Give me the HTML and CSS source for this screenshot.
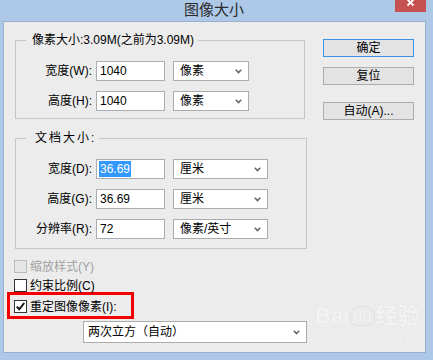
FILE: index.html
```html
<!DOCTYPE html>
<html lang="zh-CN">
<head>
<meta charset="utf-8">
<title>图像大小</title>
<link rel="stylesheet" href="styles.css">
</head>
<body>
<div class="titlebar">
  <div class="title">图像大小</div>
  <div class="close">
    <svg width="31" height="12" viewBox="0 0 31 12"><path d="M12.5 -0.5 L18.5 5.5 M18.5 -0.5 L12.5 5.5" stroke="#fff" stroke-width="1.8" fill="none"/></svg>
  </div>
</div>
<div class="dialog">
  <div class="left">
    <fieldset class="group g1">
      <legend>像素大小:3.09M(之前为3.09M)</legend>
      <div class="row">
        <label class="lbl">宽度(W):</label>
        <div class="input"><span class="val">1040</span></div>
        <div class="select s-short"><span>像素</span><svg class="chev" width="7" height="5" viewBox="0 0 7 5"><path d="M0.8 0.8 L3.5 3.6 L6.2 0.8" stroke="#666" stroke-width="1.6" fill="none"/></svg></div>
      </div>
      <div class="row">
        <label class="lbl">高度(H):</label>
        <div class="input"><span class="val">1040</span></div>
        <div class="select s-short"><span>像素</span><svg class="chev" width="7" height="5" viewBox="0 0 7 5"><path d="M0.8 0.8 L3.5 3.6 L6.2 0.8" stroke="#666" stroke-width="1.6" fill="none"/></svg></div>
      </div>
    </fieldset>
    <fieldset class="group g2">
      <legend>文档大小:</legend>
      <div class="row">
        <label class="lbl">宽度(D):</label>
        <div class="input"><span class="val sel">36.69</span></div>
        <div class="select s-long"><span>厘米</span><svg class="chev" width="7" height="5" viewBox="0 0 7 5"><path d="M0.8 0.8 L3.5 3.6 L6.2 0.8" stroke="#666" stroke-width="1.6" fill="none"/></svg></div>
      </div>
      <div class="row">
        <label class="lbl">高度(G):</label>
        <div class="input"><span class="val">36.69</span></div>
        <div class="select s-long"><span>厘米</span><svg class="chev" width="7" height="5" viewBox="0 0 7 5"><path d="M0.8 0.8 L3.5 3.6 L6.2 0.8" stroke="#666" stroke-width="1.6" fill="none"/></svg></div>
      </div>
      <div class="row">
        <label class="lbl">分辨率(R):</label>
        <div class="input"><span class="val">72</span></div>
        <div class="select s-long"><span>像素/英寸</span><svg class="chev" width="7" height="5" viewBox="0 0 7 5"><path d="M0.8 0.8 L3.5 3.6 L6.2 0.8" stroke="#666" stroke-width="1.6" fill="none"/></svg></div>
      </div>
    </fieldset>
    <div class="check disabled first"><span class="box"></span><span class="ctext">缩放样式(Y)</span></div>
    <div class="check second"><span class="box"></span><span class="ctext">约束比例(C)</span></div>
    <div class="highlight">
      <div class="check"><span class="box checked"><svg width="11" height="11" viewBox="0 0 11 11"><path d="M1.8 5.6 L4.3 8.3 L9.2 2" stroke="#111" stroke-width="2" fill="none"/></svg></span><span class="ctext">重定图像像素(I):</span></div>
    </div>
    <div class="select s-wide"><span>两次立方（自动）</span><svg class="chev" width="7" height="5" viewBox="0 0 7 5"><path d="M0.8 0.8 L3.5 3.6 L6.2 0.8" stroke="#666" stroke-width="1.6" fill="none"/></svg></div>
  </div>
  <div class="right">
    <div class="btn default">确定</div>
    <div class="btn second-btn">复位</div>
    <div class="btn third-btn">自动(A)...</div>
  </div>
  <div class="watermark">
    <div class="wm-top"><span>Bai</span><span class="paw">du</span><span>经验</span></div>
    <div class="wm-bottom">jingyan.baidu.com</div>
  </div>
</div>
</body>
</html>
```

FILE: styles.css
```css
* { box-sizing: border-box; }
html, body { margin: 0; padding: 0; }
body {
  width: 433px;
  height: 360px;
  overflow: hidden;
  background: #adc9e7;
  font-family: "Liberation Sans", "Noto Sans CJK SC", sans-serif;
  font-size: 12px;
  color: #000;
}
.titlebar {
  height: 21px;
  display: grid;
  grid-template-columns: 1fr auto 1fr;
  align-items: start;
}
.title {
  grid-column: 2;
  font-family: "Noto Sans CJK SC", sans-serif;
  font-size: 15px;
  line-height: 18px;
  height: 18px;
  padding-right: 5px;
  white-space: nowrap;
  color: #2b2b2b;
}
.close {
  grid-column: 3;
  justify-self: end;
  width: 31px;
  height: 12px;
  background: #c75050;
  margin-right: 7px;
}
.close svg { display: block; }
.dialog {
  position: relative;
  margin-left: 3px;
  width: 423px;
  height: 332px;
  border: 1px solid #97b0cc;
  background: #ececec;
  display: flex;
}
.left { width: 319px; flex: none; }
.group {
  margin: 0 0 0 11px;
  padding: 0;
  border: 1px solid #c6c6c6;
  min-width: 0;
}
.group legend {
  margin-left: 10px;
  padding: 0 4px 0 6px;
  line-height: 16px;
  height: 16px;
  font-size: 12px;
  color: #000;
}
.g1 { margin-top: 10px; width: 290px; padding: 13px 0 7px 0; }
.g2 { margin-top: 11px; width: 292px; padding: 13px 0 9px 0; }
.g2 legend { padding: 0 3px 0 9px; letter-spacing: 2px; }
.row {
  display: flex;
  align-items: center;
  height: 20px;
}
.row + .row { margin-top: 10px; }
.lbl {
  width: 76px;
  text-align: right;
  line-height: 16px;
  white-space: nowrap;
}
.input {
  margin-left: 4px;
  width: 69px;
  height: 20px;
  border: 1px solid #abadb3;
  background: #fff;
  padding-left: 2px;
  display: flex;
  align-items: center;
}
.val { padding: 0 1px; line-height: 16px; font-size: 12px; }
.val.sel { background: #3399ff; color: #fff; }
.select {
  height: 20px;
  border: 1px solid #acacac;
  background: #fff;
  display: flex;
  align-items: center;
  justify-content: space-between;
  padding: 0 6px 0 6px;
  line-height: 16px;
  white-space: nowrap;
}
.row .select { margin-left: 8px; }
.s-short { width: 76px; }
.s-long { width: 95px; }
.s-wide {
  width: 224px;
  height: 22px;
  margin-left: 79px;
  margin-top: 2px;
  padding-left: 4px;
}
.chev { display: block; flex: none; }
.check {
  display: flex;
  align-items: center;
  height: 13px;
  gap: 3px;
  line-height: 16px;
  white-space: nowrap;
}
.check.first { margin: 11px 0 0 10px; }
.check.second { margin: 6px 0 0 10px; }
.box {
  width: 13px;
  height: 13px;
  flex: none;
  border: 1px solid #333;
  background: #fff;
  display: flex;
  align-items: center;
  justify-content: center;
}
.box svg { display: block; }
.disabled .box { border-color: #bcbcbc; background: #e6e6e6; }
.disabled .ctext { color: #a2a2a2; }
.highlight {
  margin-left: 3px;
  width: 127px;
  height: 27px;
  border: 3px solid #f40000;
  padding: 5px 0 0 4px;
}
.right { flex: none; }
.btn {
  width: 91px;
  height: 18px;
  border: 1px solid #acacac;
  background: #e3e3e3;
  text-align: center;
  line-height: 16px;
  font-size: 12px;
}
.btn.default { margin-top: 17px; border-color: #3c94e6; }
.second-btn { margin-top: 10px; }
.third-btn { margin-top: 17px; }
.watermark {
  position: absolute;
  left: 311px;
  top: 281px;
  color: #f3f3f3;
  text-shadow: 0 0 1px #dadada;
  pointer-events: none;
}
.wm-top {
  display: flex;
  align-items: center;
  font-family: "Liberation Sans", "Noto Sans CJK SC", sans-serif;
  font-weight: bold;
  font-size: 22px;
  line-height: 26px;
  gap: 1px;
}
.paw {
  font-size: 15px;
  border-radius: 9px 9px 5px 5px;
  padding: 2px 2px 0;
  margin: 0 1px;
  box-shadow: 0 0 0 1px #e0e0e0;
  line-height: 16px;
}
.wm-bottom {
  font-family: "Liberation Serif", serif;
  font-size: 13px;
  line-height: 14px;
  margin-top: 2px;
  padding-left: 4px;
}
```
